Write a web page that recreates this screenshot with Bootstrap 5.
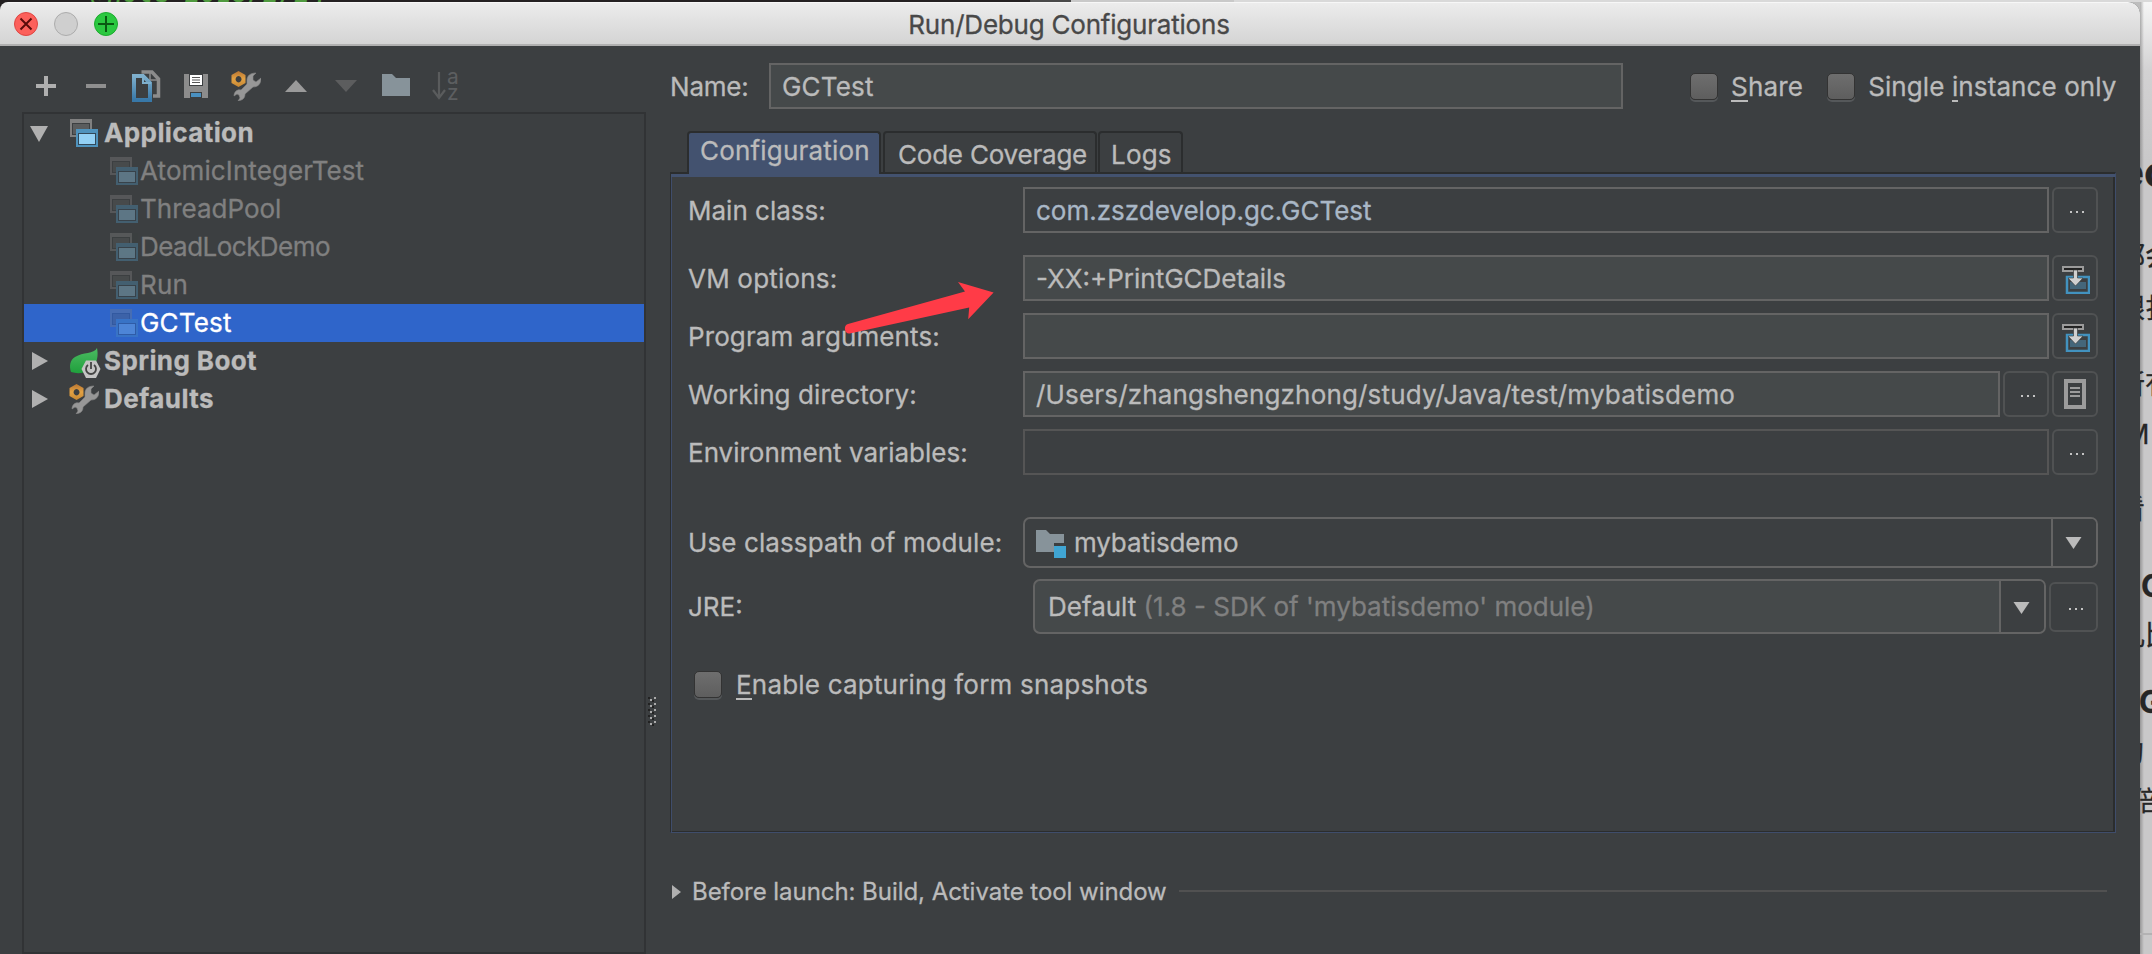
<!DOCTYPE html>
<html lang="en">
<head>
<meta charset="utf-8">
<title>Run/Debug Configurations</title>
<link href="https://cdn.jsdelivr.net/npm/bootstrap@5.3.0/dist/css/bootstrap.min.css" rel="stylesheet">
<script src="https://cdn.jsdelivr.net/npm/bootstrap@5.3.0/dist/js/bootstrap.bundle.min.js"></script>
<style>
body{width:2152px;height:954px;overflow:hidden;background:#c9c8c9;color:#bbb;font:26px/38px Inter,"Noto Sans CJK SC",sans-serif;-webkit-text-stroke:.3px}
svg{display:block;flex:none}
.backdrop{height:2px;background:linear-gradient(90deg,#242122 1030px,#4a4a4a 1030px 1071px,#c9c9c9 1071px 1234px,#d9d9d9 1234px)}
.backdrop-code{color:#4f9a3f;font:italic 26px/17px "DejaVu Sans Mono",monospace;margin-left:60px;height:2px;display:flex;align-items:flex-end;overflow:hidden}
.corner{background:linear-gradient(90deg,#242122 50%,#bdbdbd 50%)}
.win{width:2140px;height:952px;background:#3c3f41;border-radius:8px 12px 0 0;overflow:hidden;flex:none}
.titlebar{height:44px;background:linear-gradient(#ececec,#d4d4d4);border-top:1px solid #f7f7f7;border-bottom:2px solid #b0b0b0;color:#484848;display:grid;grid-template-columns:1fr auto 1fr}
.page{width:12px;height:952px;background:linear-gradient(90deg,rgba(90,90,90,.45),transparent 4px),linear-gradient(#f6f6f6,#d2d1d2 70px,#c9c8c9 160px);color:#262626;overflow:hidden;white-space:nowrap;flex:none;font-size:27px}
.page div{height:30px;line-height:30px}
.page .head{font-size:42px;font-weight:700}
.page .sub{font-size:31px;font-weight:700}
.side{width:646px}
.tools{padding:20px 0 6px 21px}
.tree{margin-left:22px;height:842px;border:2px solid #313335}
.node{height:38px}
.kid{padding-left:86px;color:#808080}
.kid svg{opacity:.38;margin-right:2px}
.kid.on{background:#2f65ca;color:#fff}
.kid.on svg{opacity:.3}
.grip{width:24px}
.main{width:1470px}
.field{height:46px;border:2px solid #646464;background:#45494a;padding:0 12px 0 11px;line-height:44px;white-space:nowrap}
.field.plain{background:#3c3f41;color:#a9b7c6}
.field.off{background:#3c3f41;border-color:#555}
.mini{width:46px;height:46px;border:2px solid #505253;border-radius:6px;margin-left:3px;flex:none}
.combo{height:51px;border:2px solid #646464;border-radius:7px;overflow:hidden}
.combo .drop{width:45px;border-left:2px solid #646464;background:#3c3f41}
.cbox{width:28px;height:27px;border-radius:5px;background:linear-gradient(#6e6e6e,#5e5e5e);border:1px solid #333;box-shadow:0 2px 0 #55585a;flex:none}
.tab-item{height:41px;border:2px solid #2b2d2e;border-bottom:0;border-radius:4px 4px 0 0;line-height:43px}
.tab-item.on{background:#43526f;line-height:36px;height:43px;margin-bottom:-2px}
.pane{width:1446px;height:661px;border:1px solid #3f4d6b;border-left-color:#2b2d2e;border-top:2px solid #2b2d2e;box-shadow:inset 0 3px #43526f,inset 1px 0 #3f4d6b,inset -2px -1px #2b2d2e;padding:14px 17px 0 18px}
.form-line{display:flex;align-items:center}
.lab{width:335px;flex:none;margin-left:-1px}
.low{padding-top:2px}
u{text-decoration:none;box-shadow:0 2px #bbb;display:inline-block;line-height:27px}
.bold{font-weight:700;letter-spacing:.4px}
.s1{letter-spacing:.1px}.s2{letter-spacing:.2px}.n1{letter-spacing:-.13px}.n2{letter-spacing:-.21px}.n5{letter-spacing:-.53px}
.arrow{position:absolute;left:840px;top:276px}
</style>
</head>
<body>
<svg width="0" height="0" class="position-absolute"><defs>
<linearGradient id="blue" x1="0" y1="0" x2="0" y2="1"><stop offset="0" stop-color="#7fb0cd"/><stop offset="1" stop-color="#3878a8"/></linearGradient>
<linearGradient id="leafg" x1="0" y1="0" x2="0" y2="1"><stop offset="0" stop-color="#4cbb62"/><stop offset="1" stop-color="#1fa03c"/></linearGradient>
<linearGradient id="nut" x1="0" y1="0" x2="0" y2="1"><stop offset="0" stop-color="#b87532"/><stop offset=".5" stop-color="#e3a243"/><stop offset="1" stop-color="#c58632"/></linearGradient>
<symbol id="app" viewBox="0 0 28 28"><path d="M0 0h22v18H0z" fill="#808080"/><path d="M2 4h18v12H2z" fill="#3c3f41"/><path d="M3 5h16v10H3z" fill="#5a5c5d"/><path d="M6 10h22v18H6z" fill="#4f93bd"/><path d="M8 14h18v12H8z" fill="#32495a"/><path d="M9 15h16v10H9z" fill="#93d1f5"/></symbol>
<symbol id="wrench" viewBox="0 0 30 30"><path d="M16 9c0-4 3-7 9-7l-3 3v4l3 2 5-4c0 6-3 9-8 9l-8 7c0 4-2 6-7 7l2-3-1-3-2-1-3 2c0-4 3-7 7-6l6-6z" fill="#979797" stroke="#868686" stroke-width=".6"/><path d="M7.500 0l7 4v8l-7 4-7-4V4zM7.500 5a3 3.200 0 1 0 .1 0z" fill="url(#nut)" fill-rule="evenodd"/></symbol>
<symbol id="paste" viewBox="0 0 28 28"><path d="M1 1h20v4H1z" fill="#222" stroke="#9b9b9b" stroke-width="2"/><path d="M5 11h22v16H5z" fill="#3c3f41" stroke="#4292bf" stroke-width="2.500"/><path d="M8 16h16v7H8z" fill="#44667a"/><path d="M11.500 4h4v8h5.500l-7.500 8L6 12h5.500z" fill="#d0d0d0" stroke="#3c3f41" stroke-width=".7"/></symbol>
<symbol id="dots" viewBox="0 0 42 42"><path d="M16 22h2v2h-2zm6 0h2v2h-2zm6 0h2v2h-2z" fill="#c4c4c4"/></symbol>
</defs></svg>
<div class="backdrop"><div class="backdrop-code">* @note 2018/2/24</div></div>
<div class="d-flex corner">
<div class="win">
 <div class="titlebar">
  <svg width="130" height="41" viewBox="0 3 130 41"><circle cx="26" cy="24" r="11.500" fill="#fc605b" stroke="#de4643"/><path d="M20.500 18.500l11 11m0-11l-11 11" stroke="#5b0b0a" stroke-width="2"/><circle cx="66" cy="24" r="11.500" fill="#cfcfcf" stroke="#acacac"/><circle cx="106" cy="24" r="11.500" fill="#2bc840" stroke="#1bab2d"/><path d="M98 24h16m-8-8v16" stroke="#0a5a12" stroke-width="2"/></svg>
  <div class="n2" style="padding-top:3px;margin-left:-2px">Run/Debug Configurations</div><div></div>
 </div>
 <div class="d-flex">
  <div class="side flex-none">
   <div class="tools d-flex">
    <svg width="450" height="40" viewBox="21 66 450 40">
     <path d="M44 76h4v8h8v4h-8v8h-4v-8h-8v-4h8z" fill="#afafaf"/><path d="M86 84h20v4H86z" fill="#8f8f8f"/>
     <path d="M141.500 72H152l6.500 7v17H153" fill="none" stroke="#8c8c8c" stroke-width="3.500"/><path d="M150 72v8h8" fill="none" stroke="#8c8c8c" stroke-width="1.500"/>
     <path d="M134 76h9l7 7v17h-16z" fill="#3c3f41" stroke="url(#blue)" stroke-width="4"/><path d="M143 76v7h8" fill="none" stroke="#7fb0cd" stroke-width="2"/>
     <path d="M184 74h24v24h-24z" fill="#8c8c8c"/><path d="M189 74h14v12h-14zM190 92h12v6h-12z" fill="#3c3f41"/><path d="M190 75h12v10h-12z" fill="#fff"/><path d="M192 77.500h8m-8 2.500h8m-8 2.500h8" stroke="#555"/><path d="M191 93h10v4h-10z" fill="#4a90c0"/>
     <use href="#wrench" x="231" y="71" width="30" height="30"/>
     <path d="M296 80l11 12h-22z" fill="#9a9a9a"/><path d="M335 80h22l-11 12z" fill="#5c5d5e"/>
     <path d="M382 74h10l4 4h14v18h-28z" fill="#87939a"/>
     <path d="M439 72v26m-6-8l6 8 6-8" fill="none" stroke="#5a5c5d" stroke-width="2.200"/><text x="447" y="83.500" font-size="21" fill="#5c5e60">a</text><text x="447" y="100" font-size="21" fill="#5c5e60">z</text>
    </svg>
   </div>
   <div class="tree">
    <div class="node d-flex align-items-center bold"><svg width="46" height="38" viewBox="24 114 46 38"><path d="M30 126h18l-9 16z" fill="#b0b0b0"/></svg><svg width="28" height="28" style="margin-right:6px"><use href="#app"/></svg><span>Application</span></div>
    <div class="node kid d-flex align-items-center"><svg width="28" height="28"><use href="#app"/></svg><span class="s1">AtomicIntegerTest</span></div>
    <div class="node kid d-flex align-items-center"><svg width="28" height="28"><use href="#app"/></svg><span>ThreadPool</span></div>
    <div class="node kid d-flex align-items-center"><svg width="28" height="28"><use href="#app"/></svg><span class="n5">DeadLockDemo</span></div>
    <div class="node kid d-flex align-items-center"><svg width="28" height="28"><use href="#app"/></svg><span class="s2">Run</span></div>
    <div class="node kid on d-flex align-items-center"><svg width="28" height="28"><use href="#app"/></svg><span class="s2">GCTest</span></div>
    <div class="node d-flex align-items-center bold"><svg width="80" height="38" viewBox="24 342 80 38"><path d="M32 352l16 9-16 9z" fill="#b0b0b0"/><path d="M97 348c-3 6-14 4-22 9-5 3-6 9-4 15 9 3 20 0 24-7 3-6 3-12 2-17z" fill="url(#leafg)"/><path d="M86 360.500h10l4.500 8.500-4.500 9H86l-4.500-9z" fill="#c4c4c4"/><path d="M88 365a5 5 0 1 0 6 0m-3-3v7" fill="none" stroke="#444" stroke-width="1.800"/></svg><span>Spring Boot</span></div>
    <div class="node d-flex align-items-center bold"><svg width="45" height="38" viewBox="24 380 45 38"><path d="M32 390l16 9-16 9z" fill="#b0b0b0"/></svg><svg width="30" height="30" style="margin-right:5px"><use href="#wrench"/></svg><span>Defaults</span></div>
   </div>
  </div>
  <div class="grip"><svg width="24" height="700" viewBox="646 46 24 700"><path d="M651 699v28" stroke="#aaa" stroke-width="2" stroke-dasharray="2 4"/><path d="M655 697v30" stroke="#aaa" stroke-width="2" stroke-dasharray="2 4"/><path d="M649 697v30m4 -1v-28" stroke="#222" stroke-width="2" stroke-dasharray="2 4"/></svg></div>
  <div class="main">
   <div class="d-flex align-items-center" style="height:80px">
    <div class="n2 low" style="width:99px">Name:</div><div class="field" style="width:854px"><span class="s2">GCTest</span></div>
    <div class="cbox" style="margin-left:67px"></div><span class="s2" style="margin:2px 0 0 13px"><u>S</u>hare</span>
    <div class="cbox" style="margin-left:24px"></div><span class="s1" style="margin:2px 0 0 13px">Single <u>i</u>nstance only</span>
   </div>
   <div class="d-flex" style="padding:5px 0 0 17px">
    <div class="tab-item on s2" style="width:194px;padding-left:11px">Configuration</div>
    <div class="tab-item n2" style="width:214px;margin-left:2px;padding-left:13px">Code Coverage</div>
    <div class="tab-item s2" style="width:85px;margin-left:1px;padding-left:11px">Logs</div>
   </div>
   <div class="pane">
    <div class="form-line" style="margin:-1px 0 22px"><div class="lab low">Main class:</div><div class="field plain flex-grow-1">com.zszdevelop.gc.GCTest</div><div class="mini"><svg width="42" height="42"><use href="#dots"/></svg></div></div>
    <div class="form-line" style="margin-bottom:12px"><div class="lab low s2">VM options:</div><div class="field flex-grow-1">-XX:+PrintGCDetails</div><div class="mini"><svg width="28" height="28" style="margin:9px 0 0 8px"><use href="#paste"/></svg></div></div>
    <div class="form-line" style="margin-bottom:12px"><div class="lab low s1">Program arguments:</div><div class="field flex-grow-1"></div><div class="mini"><svg width="28" height="28" style="margin:9px 0 0 8px"><use href="#paste"/></svg></div></div>
    <div class="form-line" style="margin-bottom:12px"><div class="lab low s1">Working directory:</div><div class="field flex-grow-1" style="letter-spacing:.17px">/Users/zhangshengzhong/study/Java/test/mybatisdemo</div><div class="mini"><svg width="42" height="42"><use href="#dots"/></svg></div><div class="mini"><svg width="42" height="42"><path d="M12 8h18v26H12z" fill="none" stroke="#9c9c9c" stroke-width="4"/><path d="M16 15h10m-10 4h10m-10 4h10" stroke="#9c9c9c" stroke-width="2"/></svg></div></div>
    <div class="form-line" style="margin-bottom:42px"><div class="lab low">Environment variables:</div><div class="field off flex-grow-1"></div><div class="mini"><svg width="42" height="42"><use href="#dots"/></svg></div></div>
    <div class="form-line" style="margin-bottom:11px"><div class="lab s1">Use classpath of module:</div><div class="combo d-flex flex-grow-1 align-items-center"><svg width="49" height="47" viewBox="1025 519 49 47"><path d="M1036 530h10l4 4h14v9h-10v9h-18z" fill="#87939a"/><path d="M1054 546h12v12h-12z" fill="#40a5d3"/></svg><span class="flex-grow-1 n1">mybatisdemo</span><div class="drop h-100"><svg width="43" height="47"><path d="M12.500 18h16l-8 12z" fill="#bbb"/></svg></div></div></div>
    <div class="form-line" style="margin-bottom:32px"><div class="lab">JRE:</div><div class="combo d-flex flex-grow-1 align-items-center" style="height:55px;margin-left:10px;background:#45494a"><span class="flex-grow-1" style="padding-left:13px">Default <span style="color:#808080">(1.8 - SDK of 'mybatisdemo' module)</span></span><div class="drop h-100"><svg width="43" height="51"><path d="M12.500 21h16l-8 12z" fill="#bbb"/></svg></div></div><div class="mini d-flex align-items-center justify-content-center" style="width:49px;height:50px"><svg width="42" height="42"><use href="#dots"/></svg></div></div>
    <div class="form-line" style="margin-left:5px"><div class="cbox" style="margin-top:-2px"></div><span class="s2" style="margin-left:14px"><u>E</u>nable capturing form snapshots</span></div>
   </div>
   <div class="d-flex align-items-center" style="margin-top:40px;font-size:24px"><svg width="22" height="38"><path d="M2 12l9 7-9 7z" fill="#b0b0b0"/></svg><span style="letter-spacing:-.05px">Before launch: Build, Activate tool window</span><div style="margin:-2px 0 0 12px;width:928px;height:2px;background:#515151"></div></div>
  </div>
 </div>
</div>
<div class="page">
 <div class="head" style="margin-top:155px;text-indent:-21px">ec</div>
 <div style="margin-top:55px;text-indent:-22px">都会</div>
 <div style="margin-top:22px;text-indent:-22px">跟扎</div>
 <div style="margin-top:46px;text-indent:-22px">所有</div>
 <div style="margin-top:20px;text-indent:-15px">M</div>
 <div style="margin-top:45px;text-indent:-22px">看</div>
 <div class="sub" style="margin-top:46px;text-indent:1px">G</div>
 <div style="margin-top:20px;text-indent:-22px">儿比</div>
 <div class="sub" style="margin-top:36px;text-indent:-1px">G</div>
 <div style="margin-top:21px;text-indent:-23px">的</div>
 <div style="margin-top:19px;text-indent:-8px">倍</div>
 <div style="margin-top:116px;height:2px;background:#b3b2b3"></div>
</div>
</div>
<svg class="arrow" width="160" height="60" viewBox="840 276 160 60"><path d="M848 324L965 291.500l-7-9.600 35.600 10.600-25.400 26.700 1-11.700-119.500 26c-5 1-7-8-1.700-9.500z" fill="#ff3b47"/></svg>
</body>
</html>
